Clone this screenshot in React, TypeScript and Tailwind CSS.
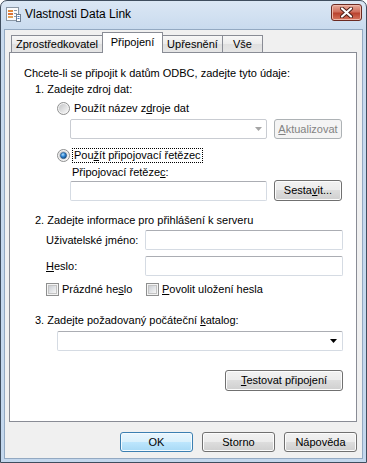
import type { ReactNode } from 'react';

const Radio = ({ id, checked }: { id: string; checked?: boolean }) => (
  <svg width="13" height="13" viewBox="0 0 13 13" className="shrink-0">
    <defs>
      <linearGradient id={`${id}-bg`} x1="0" y1="0" x2="1" y2="1">
        <stop offset="0" stopColor="#c4c5c7" />
        <stop offset="1" stopColor="#f8f8f8" />
      </linearGradient>
      <radialGradient id={`${id}-dot`} cx="0.4" cy="0.35" r="0.75">
        <stop offset="0" stopColor="#b4e0fb" />
        <stop offset="0.45" stopColor="#2f86d6" />
        <stop offset="1" stopColor="#0b3867" />
      </radialGradient>
    </defs>
    <circle cx="6.5" cy="6.5" r="6" fill="#f4f4f4" stroke="#8e8f8f" />
    <circle cx="6.5" cy="6.5" r="4.6" fill={`url(#${id}-bg)`} />
    {checked && <circle cx="6.5" cy="6.5" r="3.1" fill={`url(#${id}-dot)`} stroke="#1d4e7e" strokeWidth="0.6" />}
  </svg>
);

const Checkbox = () => (
  <span className="flex h-[13px] w-[13px] shrink-0 items-center justify-center border border-[#8e8f8f] bg-[#f4f4f4]">
    <span className="h-[9px] w-[9px] border border-[#c4c4c4] bg-[linear-gradient(135deg,#cbcfd5,#f6f6f6)]" />
  </span>
);

const Arrow = ({ color }: { color: string }) => (
  <svg width="7" height="4" viewBox="0 0 7 4">
    <polygon points="0,0 7,0 3.5,4" fill={color} />
  </svg>
);

const Button = ({ children, className = '', kind = 'normal' }: { children: ReactNode; className?: string; kind?: 'normal' | 'default' | 'disabled' }) => {
  const look =
    kind === 'disabled'
      ? 'border-[#adb2b5] bg-[#f4f4f4] text-[#838383]'
      : kind === 'default'
        ? 'border-[#3c7fb1] bg-[linear-gradient(#eaf6fd,#d9f0fc_50%,#bee6fd_50%,#a7d9f5)] shadow-[inset_0_0_0_1px_#f4fbff] text-black'
        : 'border-[#707070] bg-[linear-gradient(#f2f2f2,#ebebeb_50%,#dddddd_50%,#cfcfcf)] shadow-[inset_0_0_0_1px_#fcfcfc] text-black';
  return (
    <div className={`flex shrink-0 items-center justify-center rounded-[3px] border text-[11px] leading-[13px] ${look} ${className}`}>
      {children}
    </div>
  );
};

const Input = ({ className = '' }: { className?: string }) => (
  <div className={`shrink-0 rounded-[2px] border border-[#d5dbe3] border-t-[#abadb3] bg-white ${className}`} />
);

const tabs = [
  { label: 'Zprostředkovatel', w: 'w-[92px]' },
  { label: 'Připojení', w: 'w-[61px]', active: true },
  { label: 'Upřesnění', w: 'w-[61px]' },
  { label: 'Vše', w: 'w-[41px]' },
];

const App = () => {
  return (
    <div className="h-[463px] w-[367px] overflow-hidden bg-white font-['Liberation_Sans',Arial,sans-serif] text-[11px] leading-[13px] text-black">
      <div className="flex h-full w-full flex-col rounded-t-[7px] border border-[#3f4d5e] bg-[linear-gradient(#dbe7f4,#c8daee_30px,#c3d7ed)]">
        {/* title bar */}
        <div className="flex h-[28px] shrink-0 items-start">
          <svg width="16" height="16" viewBox="0 0 16 16" className="ml-[4px] mt-[5px]">
            <rect x="1.5" y="1.5" width="12" height="13" fill="#fbfbfb" stroke="#8a97a6" />
            <rect x="3" y="4" width="5" height="2" fill="#e2893a" />
            <rect x="3" y="7" width="5" height="2" fill="#d9733a" />
            <rect x="3" y="10" width="5" height="2" fill="#e2a35a" />
            <rect x="9" y="4" width="3" height="1" fill="#8d9bab" />
            <rect x="9" y="7" width="3" height="1" fill="#8d9bab" />
            <rect x="9" y="10" width="3" height="1" fill="#8d9bab" />
            <rect x="11.5" y="8.5" width="4" height="7" fill="#ffffff" stroke="#6f7f92" />
            <rect x="12.5" y="10" width="2" height="1" fill="#4a7fc0" />
            <rect x="12.5" y="12" width="2" height="1" fill="#4a7fc0" />
          </svg>
          <span className="ml-[4px] mt-[6px] text-[12px] leading-[15px] text-black">Vlastnosti Data Link</span>
          <div className="ml-auto mr-[4px] mt-[3px] flex h-[17px] w-[31px] items-center justify-center rounded-[3px] border border-[#6b2a22] bg-[linear-gradient(#e6a999,#d0705e_45%,#b9432f_55%,#d7765f)] shadow-[inset_0_0_0_1px_#efb8aa]">
            <svg width="13" height="11" viewBox="0 0 13 11">
              <path d="M2 1.5 L11 9.5 M11 1.5 L2 9.5" stroke="#4a1d17" strokeWidth="4" strokeLinecap="round" />
              <path d="M2 1.5 L11 9.5 M11 1.5 L2 9.5" stroke="#ffffff" strokeWidth="2.2" strokeLinecap="round" />
            </svg>
          </div>
        </div>

        {/* client area */}
        <div className="mx-[3px] mb-[3px] flex flex-1 flex-col border border-[#93a9c2] bg-[#f0f0f0] pl-[4px] pt-[2px]">
          <div className="ml-[2px] flex h-[20px] items-end">
            {tabs.map((t, i) =>
              t.active ? (
                <div
                  key={t.label}
                  className={`relative z-10 -mb-px flex h-[21px] items-start justify-center border border-b-0 border-[#898c95] bg-white pt-[3px] ${t.w} ${i > 0 ? '-ml-px' : ''}`}
                >
                  {t.label}
                </div>
              ) : (
                <div
                  key={t.label}
                  className={`flex h-[17px] items-start justify-center border border-b-0 border-[#898c95] bg-[linear-gradient(#f7f7f7,#ebebeb_50%,#dfdfdf_50%,#e6e6e6)] pt-[2px] ${t.w} ${i > 0 ? '-ml-px' : ''}`}
                >
                  {t.label}
                </div>
              ),
            )}
          </div>

          {/* tab panel */}
          <div className="flex h-[370px] w-[348px] flex-col border border-[#898c95] bg-white pt-[13px]">
            <div className="ml-[14px] flex h-[14px] items-center">Chcete-li se připojit k datům ODBC, zadejte tyto údaje:</div>
            <div className="ml-[25px] mt-[2px] flex h-[14px] items-center">1. Zadejte zdroj dat:</div>

            <div className="ml-[47px] mt-[5px] flex h-[15px] items-center gap-[3px]">
              <Radio id="r1" />
              <span className="ml-[1px]">
                Použít název z<u>d</u>roje dat
              </span>
            </div>

            <div className="ml-[60px] mt-[3px] flex h-[20px] items-center gap-[7px]">
              <div className="flex h-[20px] w-[197px] items-center justify-end rounded-[2px] border border-[#c9ccd2] bg-white pr-[4px]">
                <Arrow color="#a5a5a5" />
              </div>
              <Button kind="disabled" className="h-[20px] w-[68px]">
                <span>
                  <u>A</u>ktualizovat
                </span>
              </Button>
            </div>

            <div className="ml-[47px] mt-[8px] flex h-[16px] items-center gap-[2px]">
              <Radio id="r2" checked />
              <span className="border border-dotted border-black px-px leading-[13px]">
                Pou<u>ž</u>ít připojovací řetězec
              </span>
            </div>

            <div className="ml-[62px] mt-[2px] flex h-[14px] items-center">
              <span>
                Připojovací řetěze<u>c</u>:
              </span>
            </div>

            <div className="ml-[60px] mt-[1px] flex h-[21px] items-start gap-[7px]">
              <Input className="mt-[1px] h-[20px] w-[197px]" />
              <Button className="h-[21px] w-[68px]">
                <span>
                  Sesta<u>v</u>it...
                </span>
              </Button>
            </div>

            <div className="ml-[25px] mt-[12px] flex h-[14px] items-center">2. Zadejte informace pro přihlášení k serveru</div>

            <div className="ml-[36px] mt-[3px] flex h-[20px] items-center">
              <span className="w-[99px]">
                Uživatelské <u>j</u>méno:
              </span>
              <Input className="h-[20px] w-[198px]" />
            </div>

            <div className="ml-[36px] mt-[6px] flex h-[20px] items-center">
              <span className="w-[99px]">
                <u>H</u>eslo:
              </span>
              <Input className="h-[20px] w-[198px]" />
            </div>

            <div className="ml-[36px] mt-[6px] flex h-[15px] items-center">
              <Checkbox />
              <span className="ml-[3px] w-[84px]">
                Prázdné he<u>s</u>lo
              </span>
              <Checkbox />
              <span className="ml-[3px]">
                <u>P</u>ovolit uložení hesla
              </span>
            </div>

            <div className="ml-[25px] mt-[16px] flex h-[14px] items-center">
              <span>
                3. Zadejte požadovaný počáteční <u>k</u>atalog:
              </span>
            </div>

            <div className="ml-[47px] mt-[4px] flex h-[20px] w-[286px] items-center justify-end rounded-[2px] border border-[#d5dbe3] border-t-[#abadb3] bg-white pr-[5px]">
              <Arrow color="#000000" />
            </div>

            <div className="mt-[19px] flex justify-end pr-[13px]">
              <Button className="h-[21px] w-[118px]">
                <span>
                  <u>T</u>estovat připojení
                </span>
              </Button>
            </div>
          </div>

          {/* dialog buttons */}
          <div className="mt-[10px] flex w-[348px] justify-end gap-[9px]">
            <Button kind="default" className="h-[20px] w-[73px]">
              OK
            </Button>
            <Button className="h-[20px] w-[73px]">Storno</Button>
            <Button className="h-[20px] w-[73px]">Nápověda</Button>
          </div>
        </div>
      </div>
    </div>
  );
};

export default App;
